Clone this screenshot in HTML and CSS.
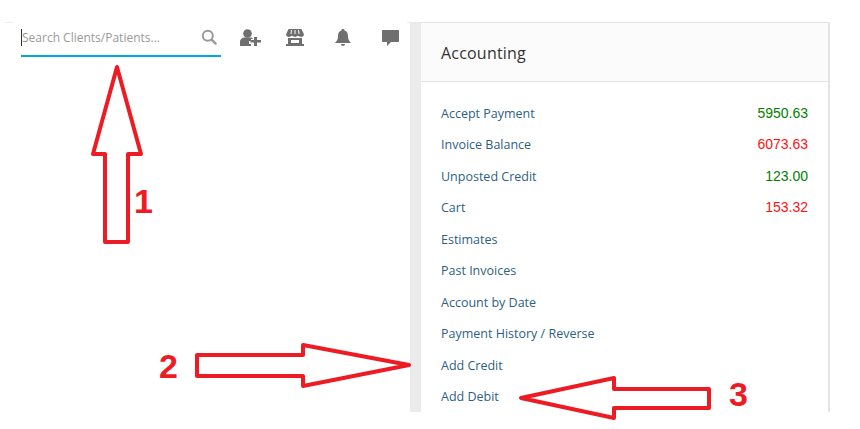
FILE: index.html
```html
<!DOCTYPE html>
<html lang="en">

<head>
    <meta charset="UTF-8">
    <title>Accounting</title>
    <link rel="stylesheet" href="styles.css">
</head>

<body>
    <div class="page">
        <!--top bar-->
        <div class="topbar">
            <div class="edge"></div>
            <div class="search">
                <span class="placeholder">Search Clients/Patients...</span>
                <svg class="search-icon" width="16" height="16" viewBox="0 0 16 16">
                    <circle cx="6.8" cy="6.8" r="5" fill="none" stroke="#999" stroke-width="2"/>
                    <path d="M10.6 10.6L14.6 14.6" stroke="#999" stroke-width="2.4" stroke-linecap="round"/>
                </svg>
            </div>
            <div class="tools">
                <svg class="tool tool-user" width="21" height="17" viewBox="0 0 21 17">
                    <circle cx="7.5" cy="4.5" r="4.3" fill="#6f6f6f"/>
                    <path d="M0 17V13C0 10 2.500 8.500 4.500 8.500H10.500C11.500 8.500 12.500 9 13 10H11V12H9V15H11V17Z" fill="#6f6f6f"/>
                    <path d="M14 8H17V11H21V13.500H17V17H14V13.500H10.500V11H14Z" fill="#6f6f6f"/>
                </svg>
                <svg class="tool tool-store" width="18" height="17" viewBox="0 0 18 17">
                    <path d="M2.500 0H15.500L18 5.500C18 7 16.500 8 15 8C14 8 13 7.500 12 6.800C11 7.500 10 8 9 8C8 8 7 7.500 6 6.800C5 7.500 4 8 3 8C1.500 8 0 7 0 5.500Z" fill="#6f6f6f"/>
                    <path d="M5.500 1L5 5M9 1V5M12.500 1L13 5" stroke="#fff" stroke-width="1"/>
                    <path d="M2 9H16V15H18V17H0V15H2ZM5 11V14H13V11Z" fill="#6f6f6f" fill-rule="evenodd"/>
                </svg>
                <svg class="tool tool-bell" width="16" height="17" viewBox="0 0 16 17">
                    <path d="M8 0C9 0 9.600 .6 9.600 1.500C12 2.200 13 4.300 13 7C13 10.500 14 12 16 14H0C2 12 3 10.500 3 7C3 4.300 4 2.200 6.400 1.500C6.400 .6 7 0 8 0Z" fill="#6f6f6f"/>
                    <path d="M6 15H10C10 16.200 9 17 8 17C7 17 6 16.200 6 15Z" fill="#6f6f6f"/>
                </svg>
                <svg class="tool tool-chat" width="17" height="16" viewBox="0 0 17 16">
                    <path d="M1 0H16C16.600 0 17 .4 17 1V11C17 11.600 16.600 12 16 12H9L5 16V12H1C.4 12 0 11.600 0 11V1C0 .4 .4 0 1 0Z" fill="#6f6f6f"/>
                </svg>
            </div>
            <div class="edge edge-right"></div>
        </div>

        <!--accounting panel-->
        <div class="side">
            <div class="card">
                <div class="card-head">Accounting</div>
                <ul class="rows">
                    <li><a href="#">Accept Payment</a><span class="num green">5950.63</span></li>
                    <li><a href="#">Invoice Balance</a><span class="num red">6073.63</span></li>
                    <li><a href="#">Unposted Credit</a><span class="num green">123.00</span></li>
                    <li><a href="#">Cart</a><span class="num red">153.32</span></li>
                    <li><a href="#">Estimates</a></li>
                    <li><a href="#">Past Invoices</a></li>
                    <li><a href="#">Account by Date</a></li>
                    <li><a href="#">Payment History / Reverse</a></li>
                    <li><a href="#">Add Credit</a></li>
                    <li><a href="#">Add Debit</a></li>
                </ul>
            </div>
        </div>
    </div>

    <!--red notes drawn on top of the screenshot-->
    <svg class="notes" width="860" height="429" viewBox="0 0 860 429">
        <g fill="none" stroke="#ed1c24" stroke-width="4" stroke-linejoin="round">
            <path d="M117 67L141 154H128V242H105V154H93Z"/>
            <path d="M409 365L303 345V355H197V376H303V386Z"/>
            <path d="M521 398L614 378V389H709V408H614V418Z"/>
        </g>
    </svg>
    <span class="mark mark-1">1</span>
    <span class="mark mark-2">2</span>
    <span class="mark mark-3">3</span>
</body>

</html>
```

FILE: styles.css
```css
* {
    margin: 0;
    padding: 0;
    box-sizing: border-box;
}

ul {
    list-style: none;
}

body {
    width: 860px;
    height: 429px;
    background-color: #fff;
    font-family: "Open Sans", "Liberation Sans", sans-serif;
    overflow: hidden;
}

.page {
    display: flex;
    align-items: flex-start;
    height: 412px;
    margin-top: 22px;
}

.topbar {
    display: flex;
    width: 410px;
    padding-left: 5px;
}

.edge {
    width: 9px;
    height: 1px;
    margin-right: 7px;
    background-color: #eee;
}

.edge-right {
    width: 3px;
    margin: 0 0 0 auto;
}

.search {
    display: flex;
    align-items: center;
    justify-content: space-between;
    width: 200px;
    height: 35px;
    padding: 0 4px 3px 0;
    border-bottom: 2px solid #00a6e8;
}

.placeholder {
    border-left: 1px solid #333;
    font-size: 12px;
    line-height: 17px;
    color: #999;
}

.tools {
    display: flex;
    align-items: center;
    height: 31px;
}

.tool-user {
    margin-left: 19px;
}

.tool-store {
    margin-left: 25px;
}

.tool-bell {
    margin-left: 31px;
}

.tool-chat {
    margin-left: 31px;
}

.side {
    width: 420px;
    height: 390px;
    padding-left: 11px;
    background-color: #ebebeb;
}

.card {
    height: 100%;
    background-color: #fff;
    border-top: 1px solid #e3e3e3;
    border-right: 2px solid #e3e3e3;
    border-radius: 2px 2px 0 0;
    overflow: hidden;
}

.card-head {
    height: 59px;
    padding: 0 20px;
    background-color: #fbfbfb;
    border-bottom: 1px solid #e3e3e3;
    font-size: 16px;
    letter-spacing: .2px;
    line-height: 60px;
    color: #333;
}

.rows {
    padding: 15.7px 20px 0;
}

.rows li {
    display: flex;
    justify-content: space-between;
    align-items: center;
    height: 31.5px;
}

.rows a {
    font-size: 12.5px;
    color: #2e5f82;
    text-decoration: none;
}

.num {
    padding-bottom: 1px;
    font-family: "Liberation Sans", Arial, sans-serif;
    font-size: 14px;
}

.green {
    color: #008000;
}

.red {
    color: #ff1010;
}

.notes {
    position: absolute;
    top: 0;
    left: 0;
}

.mark {
    position: absolute;
    font-family: "Liberation Sans", Arial, sans-serif;
    font-size: 34px;
    font-weight: bold;
    line-height: 34px;
    color: #ed1c24;
}

.mark-1 {
    left: 134px;
    top: 184px;
}

.mark-2 {
    left: 159px;
    top: 349px;
}

.mark-3 {
    left: 729px;
    top: 377px;
}
```
